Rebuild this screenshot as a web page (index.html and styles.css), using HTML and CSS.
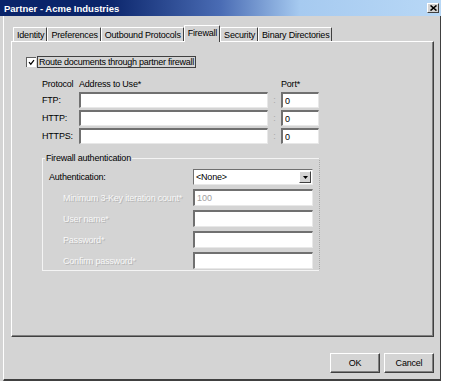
FILE: index.html
```html
<!DOCTYPE html>
<html lang="en">
<head>
    <meta charset="UTF-8">
    <title>Partner - Acme Industries</title>
    <link rel="stylesheet" href="styles.css">
</head>
<body>
    <div class="window">
        <div class="titlebar">
            <span class="title">Partner - Acme Industries</span>
            <span class="close-btn">
                <svg width="7" height="6" viewBox="0 0 7 6"><path d="M0.5 0.5 L6.5 5.5 M6.5 0.5 L0.5 5.5" stroke="#000" stroke-width="1.6"/></svg>
            </span>
        </div>
        <div class="client">
            <div class="tabs">
                <div class="tab">Identity</div>
                <div class="tab">Preferences</div>
                <div class="tab">Outbound Protocols</div>
                <div class="tab active">Firewall</div>
                <div class="tab">Security</div>
                <div class="tab">Binary Directories</div>
            </div>
            <div class="panel">
                <div class="check-row">
                    <span class="checkbox">
                        <svg width="7" height="7" viewBox="0 0 7 7"><path d="M1 3.2 L2.8 5.2 L6 1.2" fill="none" stroke="#000" stroke-width="1.2"/></svg>
                    </span>
                    <span class="check-label">Route documents through partner firewall</span>
                </div>

                <div class="proto-grid">
                    <span>Protocol</span>
                    <span>Address to Use*</span>
                    <span></span>
                    <span>Port*</span>

                    <span>FTP:</span>
                    <input class="field" type="text">
                    <span class="colon">:</span>
                    <input class="field" type="text" value="0">

                    <span>HTTP:</span>
                    <input class="field" type="text">
                    <span class="colon">:</span>
                    <input class="field" type="text" value="0">

                    <span>HTTPS:</span>
                    <input class="field" type="text">
                    <span class="colon">:</span>
                    <input class="field" type="text" value="0">
                </div>

                <fieldset class="group">
                    <legend>Firewall authentication</legend>
                    <div class="auth-grid">
                        <span>Authentication:</span>
                        <div class="select">
                            <span>&lt;None&gt;</span>
                            <span class="drop-btn">
                                <svg width="5" height="3" viewBox="0 0 5 3"><path d="M0 0 H5 L2.5 3 Z" fill="#000"/></svg>
                            </span>
                        </div>

                        <span class="disabled">Minimum 3-Key iteration count*</span>
                        <input class="field" type="text" value="100" disabled>

                        <span class="disabled">User name*</span>
                        <input class="field" type="text" disabled>

                        <span class="disabled">Password*</span>
                        <input class="field" type="text" disabled>

                        <span class="disabled">Confirm password*</span>
                        <input class="field" type="text" disabled>
                    </div>
                </fieldset>
            </div>
            <div class="footer">
                <button class="btn">OK</button>
                <button class="btn">Cancel</button>
            </div>
        </div>
    </div>
</body>
</html>
```

FILE: styles.css
```css
body {
    margin: 0;
    background-color: #fff;
    font-family: "Liberation Sans", Arial, sans-serif;
    font-size: 9px;
    letter-spacing: -0.2px;
    color: #000;
}

.window {
    width: 441px;
    height: 381px;
    background-color: #d4d4d4;
    display: flex;
    flex-direction: column;
}

.titlebar {
    height: 16px;
    display: flex;
    align-items: center;
    justify-content: space-between;
    padding: 0 2px 0 4px;
    background: linear-gradient(to right, #0a246a 0%, #0a246a 24%, #4a6cb4 50%, #a6caf0 68%, #b8d8f6 100%);
}

.title {
    color: #fff;
    font-weight: bold;
    font-size: 9.5px;
    letter-spacing: 0;
}

.close-btn {
    width: 12px;
    height: 10px;
    box-sizing: border-box;
    background-color: #d4d4d4;
    border-top: 1px solid #fff;
    border-left: 1px solid #fff;
    border-right: 1px solid #404040;
    border-bottom: 1px solid #404040;
    display: flex;
    align-items: center;
    justify-content: center;
}

.client {
    flex: 1;
    margin-left: 3px;
    border-left: 1px solid #fff;
    border-right: 1px solid #404040;
    border-bottom: 2px solid #404040;
    padding: 9px 6px 0 7px;
}

.tabs {
    display: flex;
    align-items: flex-end;
    height: 16px;
    padding-left: 2px;
}

.tab {
    height: 14px;
    box-sizing: border-box;
    padding: 0 2px 0 3px;
    display: flex;
    align-items: center;
    border-top: 1px solid #fff;
    border-left: 1px solid #fff;
    border-right: 1px solid #404040;
    border-radius: 1px 1px 0 0;
    white-space: nowrap;
}

.tab.active {
    height: 17px;
    margin-bottom: -1px;
    position: relative;
    background-color: #d4d4d4;
    padding-bottom: 2px;
}

.panel {
    height: 296px;
    box-sizing: border-box;
    border-top: 1px solid #fff;
    border-left: 1px solid #fff;
    border-right: 1px solid #404040;
    border-bottom: 1px solid #404040;
    box-shadow: inset -1px -1px 0 #808080;
    padding: 14px 0 0 14px;
}

.check-row {
    display: flex;
    align-items: center;
    height: 12px;
}

.checkbox {
    width: 10px;
    height: 10px;
    box-sizing: border-box;
    background-color: #fff;
    border-top: 1px solid #606060;
    border-left: 1px solid #606060;
    display: flex;
    align-items: center;
    justify-content: center;
    margin-right: 1px;
}

.check-label {
    border: 1px solid #404040;
    padding: 0 1px;
    line-height: 10px;
    letter-spacing: -0.25px;
}

.proto-grid {
    display: grid;
    grid-template-columns: 37px 189px 13px 38px;
    grid-template-rows: 12px 16px 16px 16px;
    row-gap: 2px;
    align-items: center;
    margin: 10px 0 0 16px;
}

.field {
    height: 100%;
    width: 100%;
    box-sizing: border-box;
    margin: 0;
    padding: 0 2px;
    background-color: #fff;
    border-style: solid;
    border-width: 2px 1px 1px 2px;
    border-color: #707070 #e8e8e8 #e8e8e8 #707070;
    font-family: inherit;
    font-size: 9px;
    color: #000;
    outline: none;
}

.field:disabled {
    color: #a0a0a0;
}

.colon {
    color: #a8a8a8;
    text-align: center;
}

.group {
    width: 278px;
    box-sizing: border-box;
    margin: 9px 0 0 16px;
    padding: 0 0 1px 6px;
    border: 1px solid #f4f4f4;
    border-right: 1px dotted #a8a8a8;
}

.group legend {
    padding: 0 1px;
    margin-left: -4px;
    line-height: 11px;
}

.auth-grid {
    display: grid;
    grid-template-columns: 144px 120px;
    grid-template-rows: 16px 17px 17px 17px 17px;
    row-gap: 4px;
    align-items: center;
    padding-top: 5px;
}

.disabled {
    padding-left: 14px;
    color: #f8f8f8;
    text-shadow: 1px 1px 0 #b4b4b4;
}

.select {
    height: 100%;
    box-sizing: border-box;
    background-color: #fff;
    border-style: solid;
    border-width: 1px;
    border-color: #707070 #e8e8e8 #e8e8e8 #707070;
    display: flex;
    align-items: center;
    justify-content: space-between;
    padding: 0 1px 0 2px;
}

.drop-btn {
    width: 12px;
    height: 12px;
    box-sizing: border-box;
    background-color: #d4d4d4;
    border-top: 1px solid #fff;
    border-left: 1px solid #fff;
    border-right: 1px solid #404040;
    border-bottom: 1px solid #404040;
    display: flex;
    align-items: center;
    justify-content: center;
}

.footer {
    display: flex;
    justify-content: flex-end;
    gap: 4px;
    margin-top: 16px;
}

.btn {
    width: 50px;
    height: 20px;
    margin: 0;
    padding: 0;
    background-color: #d4d4d4;
    border-top: 1px solid #fff;
    border-left: 1px solid #fff;
    border-right: 1px solid #404040;
    border-bottom: 1px solid #404040;
    box-shadow: inset -1px -1px 0 #808080;
    font-family: inherit;
    font-size: 9px;
    letter-spacing: -0.2px;
    color: #000;
}
```
